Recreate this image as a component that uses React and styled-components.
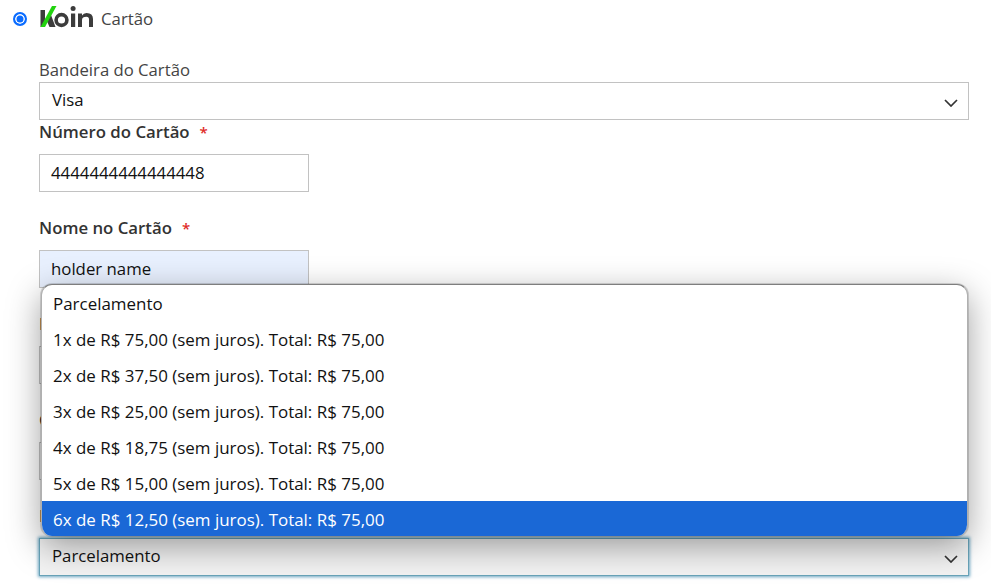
import React from "react";
import styled, { createGlobalStyle } from "styled-components";

const GlobalStyle = createGlobalStyle`
  html, body {
    margin: 0;
    padding: 0;
    height: 586px;
    overflow: hidden;
    background: #fff;
    font-family: "Open Sans", sans-serif;
    font-size: 17px;
    color: #333;
  }
`;

const Page = styled.div`
  position: relative;
  width: 991px;
  height: 586px;
  overflow: hidden;
`;

const MethodRow = styled.div`
  display: flex;
  align-items: center;
  height: 38px;
  padding-left: 13px;
`;

const Radio = styled.span`
  box-sizing: border-box;
  width: 14px;
  height: 14px;
  border-radius: 50%;
  border: 2px solid #0a6cff;
  background: #0a6cff;
  box-shadow: inset 0 0 0 1.5px #fff;
  margin-right: 12px;
`;

const Logo = styled.svg`
  width: 56px;
  height: 24px;
  margin: 0 6px 6px 0;
`;

const MethodName = styled.span`
  font-size: 16.8px;
  color: #444;
  padding-bottom: 2px;
`;

const Form = styled.div`
  display: flex;
  flex-direction: column;
  padding: 0 22px 0 39px;
`;

const PlainLabel = styled.label`
  display: block;
  line-height: 22px;
  margin: 21px 0 1px;
  font-size: 16.7px;
  color: #444;
`;

const Field = styled.div`
  margin-bottom: ${(p) => p.$gap || 0}px;
`;

const Label = styled.label`
  display: block;
  height: 34px;
  line-height: 24px;
  font-size: 16.8px;
  font-weight: 600;
  color: #333;
`;

const Star = styled.span`
  color: #e02b27;
  font-size: 15px;
  margin-left: 10px;
`;

const Input = styled.div`
  box-sizing: border-box;
  width: 270px;
  height: 38px;
  padding: 0 12px 1px 11px;
  display: flex;
  align-items: center;
  border: 1px solid #c2c2c2;
  background: ${(p) => (p.$autofill ? "#e8f0fe" : "#fff")};
  color: #111;
  font-size: 16.8px;
`;

const Select = styled.div`
  box-sizing: border-box;
  width: 100%;
  height: 38px;
  padding: 0 12px 3px;
  display: flex;
  align-items: center;
  justify-content: space-between;
  border: 1px solid ${(p) => (p.$focus ? "#68a3b8" : "#c2c2c2")};
  background: ${(p) => (p.$focus ? "#f3f3f3" : "#fff")};
  box-shadow: ${(p) => (p.$focus ? "0 0 3px 1px #6fa8c4" : "none")};
  color: #111;
  font-size: 16.8px;
`;

const Chevron = styled.svg`
  width: 14px;
  height: 8px;
  margin: 6px -2px 0 0;
  fill: none;
  stroke: #333;
  stroke-width: 1.7;
`;

const Popup = styled.ul`
  position: absolute;
  left: 41px;
  top: 284px;
  width: 927px;
  height: 252px;
  box-sizing: border-box;
  margin: 0;
  padding: 0;
  list-style: none;
  background: #fff;
  border: 1px solid #7e7e7e;
  border-left-color: #b0b0b0;
  border-right-color: #b0b0b0;
  border-bottom: none;
  border-radius: 11px;
  overflow: hidden;
  box-shadow: 0 0 0 1px rgba(0, 0, 0, 0.14), 0 10px 34px rgba(0, 0, 0, 0.38);
`;

const Option = styled.li`
  box-sizing: border-box;
  height: 36px;
  padding: 1px 0 0 11px;
  line-height: 35px;
  font-size: 16.95px;
  color: ${(p) => (p.$selected ? "#fff" : "#111")};
  background: ${(p) => (p.$selected ? "#1a68d6" : "transparent")};
`;

const options = [
  "Parcelamento",
  "1x de R$ 75,00 (sem juros). Total: R$ 75,00",
  "2x de R$ 37,50 (sem juros). Total: R$ 75,00",
  "3x de R$ 25,00 (sem juros). Total: R$ 75,00",
  "4x de R$ 18,75 (sem juros). Total: R$ 75,00",
  "5x de R$ 15,00 (sem juros). Total: R$ 75,00",
  "6x de R$ 12,50 (sem juros). Total: R$ 75,00",
];

function SelectArrow() {
  return (
    <Chevron viewBox="0 0 14 8">
      <path d="M1 1 L7 7 L13 1" />
    </Chevron>
  );
}

function KoinLogo() {
  return (
    <Logo viewBox="0 0 56 24">
      <rect x="1.5" y="6" width="4.5" height="17" fill="#3c3c3c" />
      <path d="M7 15 L12 11 L16.5 23 L10.5 23 Z" fill="#3c3c3c" />
      <path d="M1.5 23 L13 2 L17.5 2 L6 23 Z" fill="#22d30f" />
      <circle cx="22.5" cy="16" r="5.4" fill="none" stroke="#3c3c3c" strokeWidth="3.6" />
      <rect x="32" y="9.5" width="4.2" height="13.5" fill="#3c3c3c" />
      <circle cx="34.1" cy="4.6" r="2.5" fill="#3c3c3c" />
      <path d="M39 23 V9.5 H43 V11.5 Q44.5 9 47.5 9 Q54 9 54 15 V23 H50 V15.5 Q50 12.8 47.5 12.8 Q43 12.8 43 16 V23 Z" fill="#3c3c3c" />
    </Logo>
  );
}

export default function App() {
  return (
    <Page>
      <GlobalStyle />
      <MethodRow>
        <Radio />
        <KoinLogo />
        <MethodName>Cartão</MethodName>
      </MethodRow>
      <Form>
        <PlainLabel>Bandeira do Cartão</PlainLabel>
        <Select>
          Visa
          <SelectArrow />
        </Select>
        <Field $gap={24}>
          <Label>
            Número do Cartão<Star>*</Star>
          </Label>
          <Input>4444444444444448</Input>
        </Field>
        <Field $gap={24}>
          <Label>
            Nome no Cartão<Star>*</Star>
          </Label>
          <Input $autofill>holder name</Input>
        </Field>
        <Field $gap={24}>
          <Label>
            Data de Validade<Star>*</Star>
          </Label>
          <Input />
        </Field>
        <Field $gap={24}>
          <Label>
            Código de Segurança<Star>*</Star>
          </Label>
          <Input />
        </Field>
        <Field>
          <Label>
            Parcelas<Star>*</Star>
          </Label>
          <Select $focus>
            Parcelamento
            <SelectArrow />
          </Select>
        </Field>
      </Form>
      <Popup>
        {options.map((text, i) => (
          <Option key={text} $selected={i === options.length - 1}>
            {text}
          </Option>
        ))}
      </Popup>
    </Page>
  );
}
